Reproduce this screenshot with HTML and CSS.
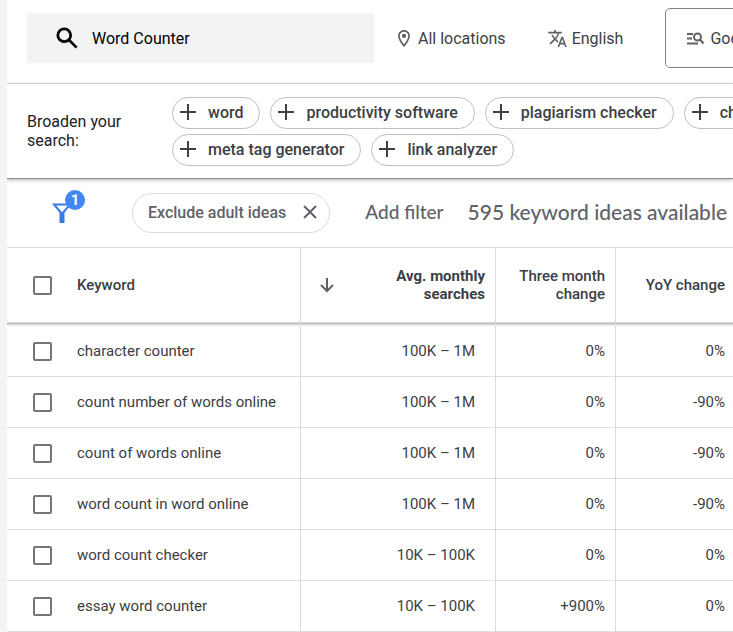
FILE: index.html
```html
<!DOCTYPE html>
<html lang="en">
<head>
<meta charset="utf-8">
<title>Keyword ideas</title>
<meta name="viewport" content="width=device-width, initial-scale=1">
<link rel="stylesheet" href="styles.css">
</head>
<body>
<main class="planner">
  <header class="topbar">
    <label class="search">
      <svg class="search-icon" viewBox="0 0 24 24" aria-hidden="true"><circle cx="9" cy="9" r="7" /><path d="M14 14l8.500 8.500"/></svg>
      <input class="search-input" type="text" value="Word Counter" aria-label="Keywords">
    </label>
    <button class="setting location" type="button">
      <svg class="icon-pin" viewBox="5 2 14 20" aria-hidden="true"><path d="M12 2C8.130 2 5 5.130 5 9c0 5.250 7 13 7 13s7-7.750 7-13c0-3.870-3.130-7-7-7zM7 9c0-2.760 2.240-5 5-5s5 2.240 5 5c0 2.880-2.880 7.190-5 9.880C9.920 16.210 7 11.850 7 9z"/><circle cx="12" cy="9" r="2.500"/></svg>
      <span>All locations</span>
    </button>
    <button class="setting language" type="button">
      <svg class="icon-translate" viewBox="1 2 22 20" aria-hidden="true"><path d="M12.870 15.070l-2.540-2.510.03-.03c1.740-1.940 2.980-4.170 3.710-6.530H17V4h-7V2H8v2H1v1.990h11.170C11.500 7.920 10.440 9.750 9 11.350 8.070 10.320 7.300 9.190 6.690 8h-2c.73 1.630 1.730 3.170 2.980 4.560l-5.090 5.020L4 19l5-5 3.110 3.110.76-2.040zM18.500 10h-2L12 22h2l1.120-3h4.750L21 22h2l-4.500-12zm-2.620 7l1.620-4.330L19.120 17h-3.240z"/></svg>
      <span>English</span>
    </button>
    <button class="network" type="button">
      <svg class="icon-network" viewBox="0 0 18 14" aria-hidden="true"><path d="M1 2h6M1 6.500h5M1 11.500h11"/><circle cx="11.500" cy="5" r="3.500"/><path d="M14 7.500l3.500 4"/></svg>
      <span>Google</span>
    </button>
  </header>

  <section class="broaden">
    <p class="broaden-label">Broaden your search:</p>
    <div class="chips">
      <div class="chip-row">
        <button class="chip" type="button"><svg class="plus" viewBox="0 0 16 16" aria-hidden="true"><path d="M8 0v16M0 8h16"/></svg>word</button>
        <button class="chip" type="button"><svg class="plus" viewBox="0 0 16 16" aria-hidden="true"><path d="M8 0v16M0 8h16"/></svg>productivity software</button>
        <button class="chip" type="button"><svg class="plus" viewBox="0 0 16 16" aria-hidden="true"><path d="M8 0v16M0 8h16"/></svg>plagiarism checker</button>
        <button class="chip" type="button"><svg class="plus" viewBox="0 0 16 16" aria-hidden="true"><path d="M8 0v16M0 8h16"/></svg>checker</button>
      </div>
      <div class="chip-row">
        <button class="chip" type="button"><svg class="plus" viewBox="0 0 16 16" aria-hidden="true"><path d="M8 0v16M0 8h16"/></svg>meta tag generator</button>
        <button class="chip" type="button"><svg class="plus" viewBox="0 0 16 16" aria-hidden="true"><path d="M8 0v16M0 8h16"/></svg>link analyzer</button>
      </div>
    </div>
  </section>

  <section class="filters">
    <button class="funnel" type="button" aria-label="Filters">
      <svg class="funnel-icon" viewBox="0 0 20 20" aria-hidden="true"><path class="funnel-cup" d="M2 1.500h16L10 11z"/><path class="funnel-stem" d="M7.500 9h5v11h-5z"/></svg>
      <span class="badge">1</span>
    </button>
    <button class="filter-chip" type="button">Exclude adult ideas
      <svg class="close" viewBox="0 0 14 14" aria-hidden="true"><path d="M1 1l12 12M13 1L1 13"/></svg>
    </button>
    <button class="add-filter" type="button">Add filter</button>
    <p class="summary">595 keyword ideas available</p>
  </section>

  <table class="ideas">
    <colgroup><col class="col-keyword"><col class="col-searches"><col class="col-month"><col></colgroup>
    <thead>
      <tr>
        <th scope="col"><label class="pick"><input type="checkbox"><span>Keyword</span></label></th>
        <th scope="col" class="sorted"><div class="sort-head"><svg class="arrow" viewBox="0 0 14 14" aria-hidden="true"><path d="M7 0v13M1 7l6 6 6-6"/></svg><span>Avg. monthly<br>searches</span></div></th>
        <th scope="col">Three month change</th>
        <th scope="col">YoY change</th>
      </tr>
    </thead>
    <tbody>
      <tr><td><label class="pick"><input type="checkbox"><span>character counter</span></label></td><td>100K – 1M</td><td>0%</td><td>0%</td></tr>
      <tr><td><label class="pick"><input type="checkbox"><span>count number of words online</span></label></td><td>100K – 1M</td><td>0%</td><td>-90%</td></tr>
      <tr><td><label class="pick"><input type="checkbox"><span>count of words online</span></label></td><td>100K – 1M</td><td>0%</td><td>-90%</td></tr>
      <tr><td><label class="pick"><input type="checkbox"><span>word count in word online</span></label></td><td>100K – 1M</td><td>0%</td><td>-90%</td></tr>
      <tr><td><label class="pick"><input type="checkbox"><span>word count checker</span></label></td><td>10K – 100K</td><td>0%</td><td>0%</td></tr>
      <tr><td><label class="pick"><input type="checkbox"><span>essay word counter</span></label></td><td>10K – 100K</td><td>+900%</td><td>0%</td></tr>
    </tbody>
  </table>
</main>
</body>
</html>
```
FILE: styles.css
```css
* { box-sizing: border-box; }

body {
  margin: 0;
  font-family: Roboto, "Liberation Sans", sans-serif;
  font-size: 15px;
  color: #3c4043;
  background: #fff;
}

button {
  font: inherit;
  color: inherit;
  background: none;
  border: 0;
  padding: 0;
  white-space: nowrap;
}

p { margin: 0; }

svg {
  display: block;
  flex: none;
  overflow: visible;
  fill: none;
  stroke: currentColor;
  stroke-width: 2;
}

.planner {
  border-left: 7px solid #f1f3f4;
  overflow: hidden;
}

/* Search and targeting */
.topbar {
  display: flex;
  align-items: center;
  height: 84px;
  padding: 0 0 8px 20px;
  border-bottom: 1px solid #dadce0;
  font-size: 16px;
}

.search {
  display: flex;
  flex: none;
  align-items: center;
  gap: 14px;
  width: 347px;
  height: 50px;
  padding-left: 29px;
  background: #f1f3f4;
  color: #000;
}

.search-icon { width: 22px; height: 22px; stroke-width: 3; }

.search-input {
  flex: 1;
  min-width: 0;
  border: 0;
  padding: 2px 0 0;
  background: none;
  font: inherit;
  color: #000;
  outline: 0;
}

.setting {
  display: flex;
  flex: none;
  align-items: center;
  padding-top: 2px;
}

.location { gap: 8px; margin-left: 24px; }
.language { gap: 5px; margin-left: 42px; }

.icon-pin { width: 12px; height: 17px; }
.icon-translate { width: 19px; height: 17px; }
.icon-pin,
.icon-translate { fill: #5f6368; stroke: none; }

.network {
  display: flex;
  flex: none;
  align-items: center;
  gap: 6px;
  height: 60px;
  margin-left: 42px;
  padding: 2px 20px 0;
  border: 1px solid #80868b;
  border-radius: 5px;
}

.icon-network { width: 18px; height: 14px; color: #5f6368; }

/* Suggested terms */
.broaden {
  position: relative;
  display: flex;
  align-items: center;
  padding: 13px 0 12px 20px;
  border-bottom: 1px solid #8c8c8c;
  box-shadow: 0 1px 4px rgba(0, 0, 0, 0.3);
}

.broaden-label {
  flex: none;
  width: 145px;
  padding: 0 40px 2px 0;
  font-size: 16px;
  line-height: 19px;
  color: #202124;
}

.chips { display: grid; gap: 5px; }
.chip-row { display: flex; gap: 10px; }

.chip {
  display: flex;
  flex: none;
  align-items: center;
  gap: 12px;
  height: 32px;
  padding: 0 16px 2px 7px;
  border: 1px solid #bdc1c6;
  border-radius: 16px;
  font-size: 16px;
  font-weight: 500;
}

.plus { width: 16px; height: 16px; }

/* Active filters */
.filters {
  display: flex;
  align-items: center;
  height: 69px;
  padding-left: 45px;
  border-bottom: 1px solid #dadce0;
  color: #5f6368;
  white-space: nowrap;
}

.funnel {
  position: relative;
  flex: none;
  width: 20px;
  height: 20px;
  color: #3b78e7;
}

.funnel-icon { width: 20px; height: 20px; }
.funnel-stem { fill: currentColor; stroke: none; }

.badge {
  position: absolute;
  top: -13px;
  left: 13px;
  width: 20px;
  height: 20px;
  border-radius: 50%;
  background: #4285f4;
  color: #fff;
  font-weight: 700;
  line-height: 20px;
}

.filter-chip {
  display: flex;
  flex: none;
  align-items: center;
  gap: 17px;
  height: 40px;
  margin-left: 60px;
  padding: 0 12px 2px 15px;
  border: 1px solid #dadce0;
  border-radius: 20px;
  font-size: 16px;
  font-weight: 500;
}

.close { width: 14px; height: 14px; }

.add-filter,
.summary {
  padding-bottom: 4px;
  font-family: Lato, sans-serif;
  font-weight: 500;
}

.add-filter { margin-left: 35px; font-size: 19px; }
.summary { margin-left: 24px; font-size: 21px; }

/* Keyword table */
.ideas {
  width: 100%;
  table-layout: fixed;
  border-collapse: separate;
  border-spacing: 0;
}

.col-keyword { width: 294px; }
.col-searches { width: 195px; }
.col-month { width: 120px; }

th,
td {
  padding: 0 10px;
  border-right: 1px solid #dadce0;
  border-bottom: 1px solid #dadce0;
  text-align: right;
}

th {
  height: 78px;
  padding-bottom: 3px;
  border-bottom-color: #e8eaed;
  box-shadow: inset 0 -1px #dadce0, inset 0 -2px #bdbdc2, inset 0 -3px #d5d6da;
  font-weight: 500;
  line-height: 18px;
}

td { height: 51px; }

th:first-child,
td:first-child {
  padding-left: 26px;
  padding-right: 0;
  text-align: left;
}

td:nth-child(2) { padding-right: 20px; }

th:last-child,
td:last-child {
  padding-right: 8px;
  border-right: 0;
}

.sorted { font-weight: 700; }

.sort-head {
  display: flex;
  align-items: center;
  justify-content: space-between;
  padding-left: 9px;
}

.arrow { width: 14px; height: 14px; color: #5f6368; }

.pick {
  display: flex;
  align-items: center;
  gap: 25px;
}

.pick input {
  appearance: none;
  flex: none;
  width: 19px;
  height: 19px;
  margin: 0;
  border: 2px solid #757575;
  border-radius: 2px;
  background: #fff;
}
```
